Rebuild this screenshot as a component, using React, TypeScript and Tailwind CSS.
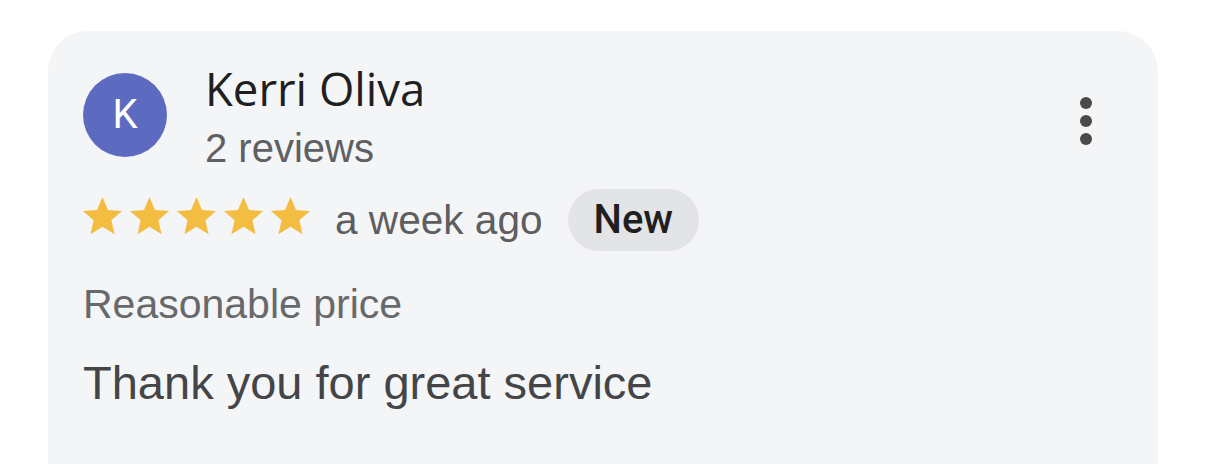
import React from "react";

function Star() {
  return (
    <svg width="47" height="47" viewBox="0 0 24 24" className="shrink-0">
      <path
        fill="#f3bd42"
        d="M12 17.27L18.18 21l-1.64-7.03L22 9.24l-7.19-.61L12 2 9.19 8.63 2 9.24l5.46 4.73L5.82 21z"
      />
    </svg>
  );
}

export default function App() {
  const sans = { fontFamily: '"Liberation Sans", Arial, sans-serif' };

  return (
    <div className="min-h-screen bg-white pt-[31px] pl-[48px] overflow-hidden">
      <div
        className="w-[1110px] h-[520px] bg-[#f4f5f7] rounded-t-[40px] pt-[31px] pl-[35px] pr-[66px]"
        style={sans}
      >
        {/* Header */}
        <div className="flex items-start">
          <div className="mt-[11px] w-[84px] h-[84px] rounded-full bg-[#5c6bc0] flex items-center justify-center shrink-0">
            <span
              className="text-white text-[40px] leading-none"
              style={{ fontFamily: "Roboto, sans-serif" }}
            >
              K
            </span>
          </div>
          <div className="ml-[38px]">
            <div
              className="text-[45.5px] leading-[52px] text-[#1f1f1f]"
              style={{ fontFamily: '"Open Sans", sans-serif' }}
            >
              Kerri Oliva
            </div>
            <div className="mt-[10px] text-[40px] leading-[48px] text-[#5f6063]">
              2 reviews
            </div>
          </div>
          <div className="ml-auto mt-[35px] flex flex-col gap-[6px]">
            <span className="block w-[12px] h-[12px] rounded-full bg-[#4a4a4b]" />
            <span className="block w-[12px] h-[12px] rounded-full bg-[#4a4a4b]" />
            <span className="block w-[12px] h-[12px] rounded-full bg-[#4a4a4b]" />
          </div>
        </div>

        {/* Rating row */}
        <div className="mt-[17px] flex items-center">
          <div className="flex -ml-[4px] mb-[7px]">
            <Star />
            <Star />
            <Star />
            <Star />
            <Star />
          </div>
          <span className="ml-[21px] text-[40.6px] leading-[48px] text-[#5e5e60]">
            a week ago
          </span>
          <span
            className="ml-[25px] h-[62px] px-[26px] rounded-full bg-[#e3e4e6] flex items-center text-[40px] font-medium text-[#1f1f1f]"
            style={{ fontFamily: "Roboto, sans-serif" }}
          >
            New
          </span>
        </div>

        <div className="mt-[29px] text-[41px] leading-[48px] text-[#68696b]">
          Reasonable price
        </div>
        <div className="mt-[28px] text-[47px] leading-[54px] text-[#444547]">
          Thank you for great service
        </div>
      </div>
    </div>
  );
}
